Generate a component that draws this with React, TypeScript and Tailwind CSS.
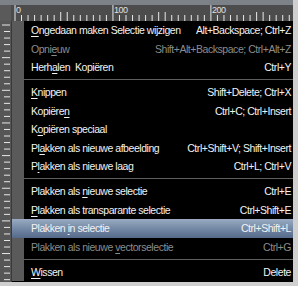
import React from 'react';

type Item =
  | { kind: 'sep' }
  | { kind: 'item'; label: string; ul: number; shortcut?: string; disabled?: boolean; active?: boolean };

const items: Item[] = [
  { kind: 'item', label: 'Ongedaan maken Selectie wijzigen', ul: 0, shortcut: 'Alt+Backspace; Ctrl+Z' },
  { kind: 'item', label: 'Opnieuw', ul: 4, shortcut: 'Shift+Alt+Backspace; Ctrl+Alt+Z', disabled: true },
  { kind: 'item', label: 'Herhalen  Kopiëren', ul: 4, shortcut: 'Ctrl+Y' },
  { kind: 'sep' },
  { kind: 'item', label: 'Knippen', ul: 0, shortcut: 'Shift+Delete; Ctrl+X' },
  { kind: 'item', label: 'Kopiëren', ul: 7, shortcut: 'Ctrl+C; Ctrl+Insert' },
  { kind: 'item', label: 'Kopiëren speciaal', ul: 1 },
  { kind: 'item', label: 'Plakken als nieuwe afbeelding', ul: 2, shortcut: 'Ctrl+Shift+V; Shift+Insert' },
  { kind: 'item', label: 'Plakken als nieuwe laag', ul: 1, shortcut: 'Ctrl+L; Ctrl+V' },
  { kind: 'sep' },
  { kind: 'item', label: 'Plakken als nieuwe selectie', ul: 12, shortcut: 'Ctrl+E' },
  { kind: 'item', label: 'Plakken als transparante selectie', ul: 0, shortcut: 'Ctrl+Shift+E' },
  { kind: 'item', label: 'Plakken in selectie', ul: 8, shortcut: 'Ctrl+Shift+L', active: true },
  { kind: 'item', label: 'Plakken als nieuwe vectorselectie', ul: 19, shortcut: 'Ctrl+G', disabled: true },
  { kind: 'sep' },
  { kind: 'item', label: 'Wissen', ul: 0, shortcut: 'Delete' },
];

// label met onderstreepte sneltoetsletter
function Label({ text, ul }: { text: string; ul: number }) {
  return (
    <span className="whitespace-pre">
      {text.slice(0, ul)}
      <span className="underline underline-offset-2">{text.charAt(ul)}</span>
      {text.slice(ul + 1)}
    </span>
  );
}

function TopRuler() {
  const ticks = [];
  for (let i = 0; i < 43; i++) {
    const x = 4 + i * 6.53;
    const major = i % 15 === 0;
    const mid = i % 15 === 7 || i % 15 === 8;
    ticks.push(
      <line
        key={i}
        x1={x}
        x2={x}
        y1={major ? 5 : mid ? 12 : 15}
        y2={21}
        stroke="#e8e8e8"
        strokeWidth={1}
      />
    );
  }
  return (
    <svg width={282} height={21} className="block">
      <rect width={282} height={5} fill="#7d8288" />
      <rect y={5} width={282} height={16} fill="#4c4c4c" />
      {ticks}
      <text x={5} y={13} fontSize={9} fill="#e0e0e0" fontFamily="Liberation Sans, sans-serif">0</text>
      <text x={103} y={13} fontSize={9} fill="#e0e0e0" fontFamily="Liberation Sans, sans-serif">100</text>
      <text x={201} y={13} fontSize={9} fill="#e0e0e0" fontFamily="Liberation Sans, sans-serif">200</text>
    </svg>
  );
}

function LeftRuler() {
  const ticks = [];
  for (let i = 0; i < 40; i++) {
    const y = 4 + i * 6.53;
    const long = i % 5 === 0;
    ticks.push(
      <line key={i} x1={long ? 2 : 4} x2={10} y1={y} y2={y} stroke="#e8e8e8" strokeWidth={1} />
    );
  }
  return (
    <svg width={12} height={261} className="block">
      <rect width={11} height={261} fill="#565656" />
      <rect x={11} width={1} height={261} fill="#3a3a3a" />
      {ticks}
    </svg>
  );
}

export default function App() {
  return (
    <div
      className="w-[298px] h-[286px] overflow-hidden bg-[#cfcfcf] text-[10.5px] tracking-[-0.45px] leading-none"
      style={{ fontFamily: '"Liberation Sans", Arial, sans-serif' }}
    >
      <div className="flex h-[21px]">
        <div className="w-[11px] h-full bg-[#5a5a5a] border-t-[5px] border-[#7d8288]" />
        <TopRuler />
      </div>

      <div className="flex">
        <LeftRuler />
        <div className="w-[281px] h-[261px] flex flex-col bg-black">
          {items.map((it, i) =>
            it.kind === 'sep' ? (
              <div key={i} className="flex h-[6.5px] shrink-0">
                <div className="w-[12px] bg-[#5a5a5a]" />
                <div className="flex-1 flex items-center">
                  <div className="w-full h-px bg-[#5e5e5e]" />
                </div>
              </div>
            ) : (
              <div
                key={i}
                className={
                  'flex h-[18.5px] shrink-0 items-center ' +
                  (it.active ? 'bg-gradient-to-b from-[#9aabc2] via-[#7489a6] to-[#55698a]' : '')
                }
              >
                <div className={'w-[12px] h-full ' + (it.active ? '' : 'bg-[#5a5a5a]')} />
                <div
                  className={
                    'flex-1 flex justify-between items-center whitespace-nowrap pl-[7px] pr-[2px] ' +
                    (it.disabled ? 'text-[#8c8c8c]' : 'text-[#f2f2f2]')
                  }
                >
                  <Label text={it.label} ul={it.ul} />
                  {it.shortcut && <span>{it.shortcut}</span>}
                </div>
              </div>
            )
          )}
        </div>
      </div>
    </div>
  );
}
